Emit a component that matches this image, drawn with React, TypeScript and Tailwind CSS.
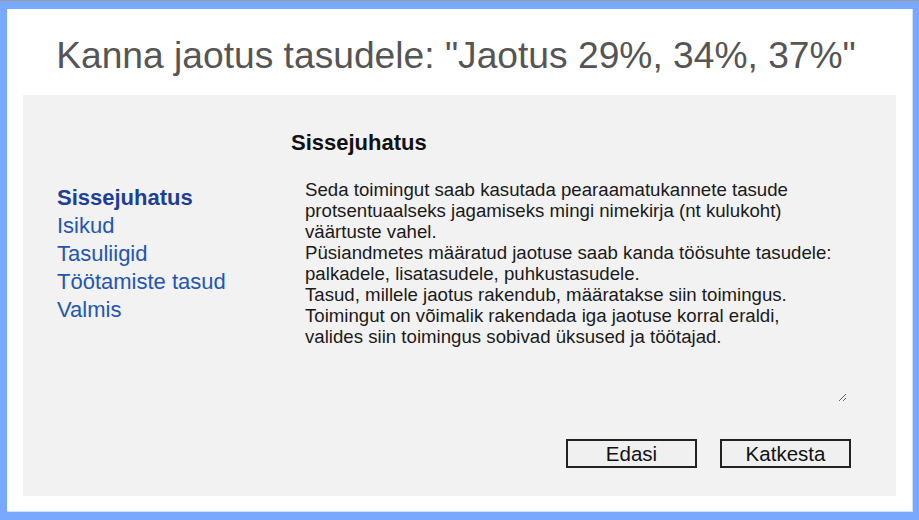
const navItems = ["Sissejuhatus", "Isikud", "Tasuliigid", "Töötamiste tasud", "Valmis"];

const introText =
  "Seda toimingut saab kasutada pearaamatukannete tasude\n" +
  "protsentuaalseks jagamiseks mingi nimekirja (nt kulukoht)\n" +
  "väärtuste vahel.\n" +
  "Püsiandmetes määratud jaotuse saab kanda töösuhte tasudele:\n" +
  "palkadele, lisatasudele, puhkustasudele.\n" +
  "Tasud, millele jaotus rakendub, määratakse siin toimingus.\n" +
  "Toimingut on võimalik rakendada iga jaotuse korral eraldi,\n" +
  "valides siin toimingus sobivad üksused ja töötajad.";

export default function App() {
  return (
    <div className="w-[919px] h-[520px] bg-[#78a9ff] border-t border-[#9a9a9a] pt-[8px] pl-[7px] pr-[6px] pb-[8px] font-['Liberation_Sans',Arial,sans-serif]">
      <div className="w-full h-full bg-white border-r border-b border-[#cfe0ff] flex flex-col">
        {/* title */}
        <h1 className="mt-[24px] h-[44px] pr-[7px] text-center text-[37.2px] leading-[44px] text-[#555555] whitespace-nowrap">
          Kanna jaotus tasudele: "Jaotus 29%, 34%, 37%"
        </h1>

        <div className="mt-[18px] mx-[16px] mb-[15px] flex-1 bg-[#f2f2f2] flex">
          {/* steps */}
          <div className="w-[268px] pl-[34px] pt-[89px] flex flex-col text-[22px] leading-[28px]">
            {navItems.map((item, i) => (
              <a
                key={item}
                href="#"
                className={
                  i === 0
                    ? "font-bold text-[#1d3f95]"
                    : "text-[#2356b0]"
                }
              >
                {item}
              </a>
            ))}
          </div>

          {/* content */}
          <div className="flex-1 pt-[35px] flex flex-col">
            <h2 className="text-[22px] leading-[26px] font-bold text-[#111]">Sissejuhatus</h2>
            <textarea
              readOnly
              value={introText}
              className="mt-[21px] ml-[6px] w-[550px] h-[225px] px-2 py-[2px] bg-transparent text-[18.65px] leading-[21px] text-[#1a1a1a] outline-none font-['Liberation_Sans',Arial,sans-serif]"
            />
            <div className="mt-[37px] mr-[45px] flex justify-end gap-[23px]">
              <button className="w-[131px] h-[29px] border-2 border-[#222] bg-[#f0f0f0] text-[20.5px] leading-[25px] text-[#111]">
                Edasi
              </button>
              <button className="w-[131px] h-[29px] border-2 border-[#222] bg-[#f0f0f0] text-[20.5px] leading-[25px] text-[#111]">
                Katkesta
              </button>
            </div>
          </div>
        </div>
      </div>
    </div>
  );
}
